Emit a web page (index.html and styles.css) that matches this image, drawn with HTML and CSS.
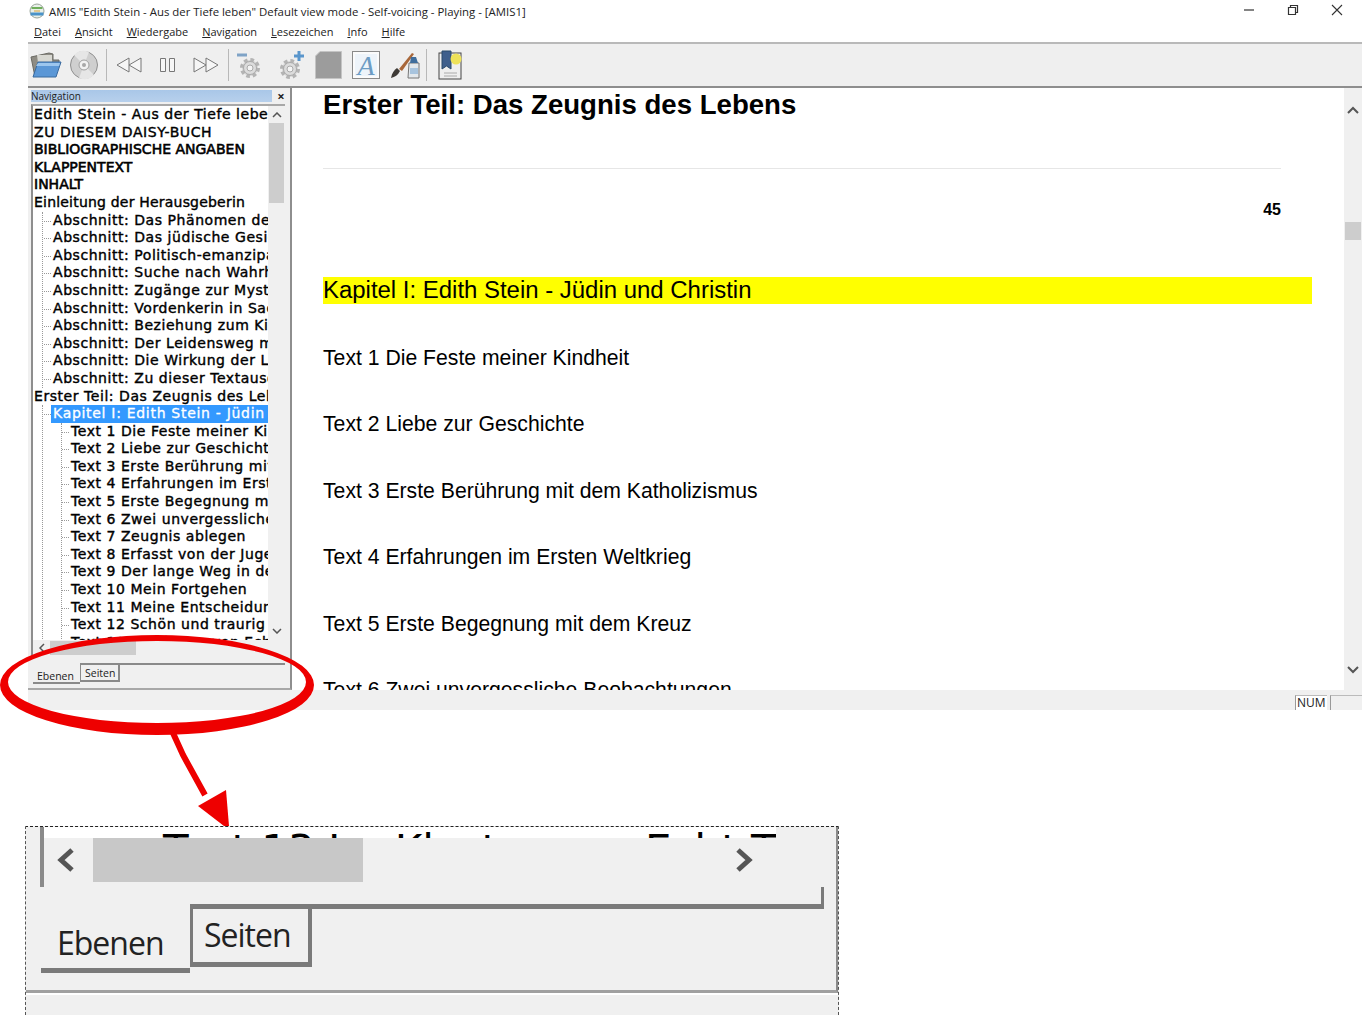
FILE: index.html
```html
<!DOCTYPE HTML>
<html lang="de">
<head>
  <title>AMIS</title>
  <meta content="text/html;charset=utf-8" http-equiv="Content-type"/>
  <link rel="stylesheet" href="styles.css">
</head>
<body>
<div class="window">
  <div class="titlebar">
    <svg class="app-icon" width="16" height="16" viewBox="0 0 16 16">
      <circle cx="8" cy="8" r="7" fill="#e8efe8" stroke="#9aa59a"/>
      <path d="M2.500 5h11" stroke="#6fae5a" stroke-width="2"/>
      <path d="M1.500 11h13" stroke="#4a93c9" stroke-width="3"/>
      <path d="M5 8h6" stroke="#d9a43a"/>
    </svg>
    <span class="title-text">AMIS "Edith Stein - Aus der Tiefe leben" Default view mode - Self-voicing - Playing - [AMIS1]</span>
    <div class="win-buttons">
      <svg width="12" height="12" viewBox="0 0 12 12"><path d="M1 6h10" stroke="#333" stroke-width="1.200"/></svg>
      <svg width="12" height="12" viewBox="0 0 12 12"><path d="M1.500 3.500h7v7h-7zM3.500 3.500v-2h7v7h-2" fill="none" stroke="#333" stroke-width="1.200"/></svg>
      <svg width="12" height="12" viewBox="0 0 12 12"><path d="M1 1l10 10M11 1L1 11" stroke="#333" stroke-width="1.100"/></svg>
    </div>
  </div>

  <div class="menubar">
    <span><u>D</u>atei</span>
    <span><u>A</u>nsicht</span>
    <span><u>W</u>iedergabe</span>
    <span><u>N</u>avigation</span>
    <span><u>L</u>esezeichen</span>
    <span><u>I</u>nfo</span>
    <span><u>H</u>ilfe</span>
  </div>

  <div class="toolbar">
    <svg class="tool t-folder" width="32" height="26" viewBox="0 0 32 26">
      <path d="M5 25L1 5l18-4 4 1 0 6h6v4H9z" fill="#8e8c84" stroke="#6b6a64"/>
      <path d="M7 3h15v8H8z" fill="#d8d8d2"/>
      <path d="M8 10h23l-5 15H3z" fill="#5b97d6" stroke="#3a6a9e"/>
      <path d="M8 11h22l-1 3H6z" fill="#9cc6ee"/>
    </svg>
    <svg class="tool t-cd" width="30" height="30" viewBox="0 0 30 30">
      <circle cx="15" cy="15" r="13.500" fill="#cfcfcf" stroke="#8f8f8f"/>
      <path d="M15 15L5 5a14 14 0 0 1 15-3zM15 15l10 10a14 14 0 0 1-15 3z" fill="#e6e6e6"/>
      <circle cx="15" cy="15" r="5" fill="#f2f2f2" stroke="#a0a0a0"/>
      <circle cx="15" cy="15" r="2" fill="#a8a8a8"/>
    </svg>
    <span class="sep"></span>
    <svg class="tool t-rew" width="26" height="16" viewBox="0 0 26 16">
      <path d="M13 1L1 8l12 7zM25 1L13 8l12 7z" fill="#f6f6f6" stroke="#777"/>
    </svg>
    <svg class="tool t-pause" width="17" height="16" viewBox="0 0 17 16">
      <path d="M1.500 1.500h5v13h-5zM10.500 1.500h5v13h-5z" fill="#f6f6f6" stroke="#777"/>
    </svg>
    <svg class="tool t-fwd" width="26" height="16" viewBox="0 0 26 16">
      <path d="M1 1l12 7-12 7zM13 1l12 7-12 7z" fill="#f6f6f6" stroke="#777"/>
    </svg>
    <span class="sep"></span>
    <svg class="tool t-gear1" width="26" height="28" viewBox="0 0 26 28">
      <path d="M1 4h10" stroke="#7fa3c6" stroke-width="3"/>
      <circle cx="14" cy="17" r="8" fill="#d6d6d6" stroke="#b4b4b4" stroke-width="4" stroke-dasharray="3.500 2.800"/>
      <circle cx="14" cy="17" r="6.500" fill="#dcdcdc" stroke="#aaa"/>
      <circle cx="14" cy="17" r="3" fill="#f4f4f4" stroke="#aaa"/>
    </svg>
    <svg class="tool t-gear2" width="26" height="28" viewBox="0 0 26 28">
      <path d="M15 5h10M20 0v10" stroke="#5a96cc" stroke-width="3"/>
      <circle cx="11" cy="18" r="8" fill="#d6d6d6" stroke="#b4b4b4" stroke-width="4" stroke-dasharray="3.500 2.800"/>
      <circle cx="11" cy="18" r="6.500" fill="#dcdcdc" stroke="#aaa"/>
      <circle cx="11" cy="18" r="3" fill="#f4f4f4" stroke="#aaa"/>
    </svg>
    <svg class="tool t-square" width="27" height="28" viewBox="0 0 27 28">
      <path d="M5 .5h21.500v27H.500V5z" fill="#9c9c9c" stroke="#c4c4c4"/>
    </svg>
    <svg class="tool t-font" width="28" height="28" viewBox="0 0 28 28">
      <rect x=".5" y=".5" width="27" height="27" fill="#fbfbfb" stroke="#8a8a8a"/>
      <rect x="3" y="3" width="22" height="22" fill="#eef4fa"/>
      <text x="14" y="24" text-anchor="middle" class="font-glyph">A</text>
    </svg>
    <svg class="tool t-brush" width="31" height="28" viewBox="0 0 31 28">
      <path d="M1 27c4-1 7-3 9-7l-3-3c-3 2-5 5-6 10z" fill="#3e3a36"/>
      <path d="M9 18L22 2l2 1-12 17z" fill="#a8673a"/>
      <path d="M19 12h10v15H18z" fill="#e3e8ec" stroke="#777"/>
      <path d="M20 17h8v6h-8z" fill="#a8c4de"/>
      <path d="M21 6h5l2 6h-8z" fill="#3f6d9c"/>
    </svg>
    <span class="sep"></span>
    <svg class="tool t-bookmark" width="25" height="30" viewBox="0 0 25 30">
      <rect x="1" y="3" width="22" height="26" fill="#efefef" stroke="#444"/>
      <path d="M4 1h9v18l-4.500-3L4 19z" fill="#3f5f8c" stroke="#2b4a6b"/>
      <circle cx="18" cy="9" r="5.500" fill="#eee25a"/>
      <path d="M6 23h13M6 26h13" stroke="#aaa"/>
    </svg>
  </div>

  <div class="workspace">
    <div class="navpane">
      <div class="nav-caption"><span>Navigation</span><b class="nav-close">×</b></div>
      <div class="nav-box">
        <div class="tree-row-area">
          <ul class="tree">
            <li>Edith Stein - Aus der Tiefe leben</li>
            <li>ZU DIESEM DAISY-BUCH</li>
            <li class="caps">BIBLIOGRAPHISCHE ANGABEN</li>
            <li class="caps">KLAPPENTEXT</li>
            <li class="caps">INHALT</li>
            <li class="tight">Einleitung der Herausgeberin
              <ul>
                <li>Abschnitt: Das Phänomen der</li>
                <li>Abschnitt: Das jüdische Gesicht</li>
                <li>Abschnitt: Politisch-emanzipativ</li>
                <li>Abschnitt: Suche nach Wahrheit</li>
                <li>Abschnitt: Zugänge zur Mystik</li>
                <li>Abschnitt: Vordenkerin in Sachen</li>
                <li>Abschnitt: Beziehung zum Kind</li>
                <li>Abschnitt: Der Leidensweg mit</li>
                <li>Abschnitt: Die Wirkung der Lehre</li>
                <li>Abschnitt: Zu dieser Textausgabe</li>
              </ul>
            </li>
            <li>Erster Teil: Das Zeugnis des Lebens
              <ul>
                <li><span class="selected">Kapitel I: Edith Stein - Jüdin</span>
                  <ul>
                    <li>Text 1 Die Feste meiner Kindheit</li>
                    <li>Text 2 Liebe zur Geschichte</li>
                    <li>Text 3 Erste Berührung mit dem</li>
                    <li>Text 4 Erfahrungen im Ersten</li>
                    <li>Text 5 Erste Begegnung mit</li>
                    <li>Text 6 Zwei unvergessliche</li>
                    <li>Text 7 Zeugnis ablegen</li>
                    <li>Text 8 Erfasst von der Jugend</li>
                    <li>Text 9 Der lange Weg in den</li>
                    <li>Text 10 Mein Fortgehen</li>
                    <li>Text 11 Meine Entscheidung</li>
                    <li>Text 12 Schön und traurig</li>
                    <li>Text 13 Im Kloster von Echt Text</li>
                  </ul>
                </li>
              </ul>
            </li>
          </ul>
        </div>
        <div class="nav-vscroll">
          <svg class="chev" width="10" height="6" viewBox="0 0 10 6"><path d="M1 5l4-4 4 4" fill="none" stroke="#555" stroke-width="1.500"/></svg>
          <span class="nav-vthumb"></span>
          <svg class="chev chev-end" width="10" height="6" viewBox="0 0 10 6"><path d="M1 1l4 4 4-4" fill="none" stroke="#555" stroke-width="1.500"/></svg>
        </div>
      </div>
      <div class="nav-hscroll">
        <svg width="6" height="10" viewBox="0 0 6 10"><path d="M5 1L1 5l4 4" fill="none" stroke="#555" stroke-width="1.500"/></svg>
        <span class="nav-hthumb"></span>
      </div>
      <div class="tabs">
        <span class="tab tab-on">Ebenen</span>
        <span class="tab tab-off">Seiten</span>
      </div>
    </div>

    <div class="doc">
      <div class="doc-body">
        <h1>Erster Teil: Das Zeugnis des Lebens</h1>
        <hr>
        <p class="pageno">45</p>
        <h2>Kapitel I: Edith Stein - Jüdin und Christin</h2>
        <p class="entry">Text 1 Die Feste meiner Kindheit</p>
        <p class="entry">Text 2 Liebe zur Geschichte</p>
        <p class="entry">Text 3 Erste Berührung mit dem Katholizismus</p>
        <p class="entry">Text 4 Erfahrungen im Ersten Weltkrieg</p>
        <p class="entry">Text 5 Erste Begegnung mit dem Kreuz</p>
        <p class="entry">Text 6 Zwei unvergessliche Beobachtungen</p>
      </div>
      <div class="doc-scroll">
        <svg width="12" height="8" viewBox="0 0 12 8"><path d="M1 7l5-5 5 5" fill="none" stroke="#555" stroke-width="2"/></svg>
        <span class="doc-thumb"></span>
        <svg class="chev-end" width="12" height="8" viewBox="0 0 12 8"><path d="M1 1l5 5 5-5" fill="none" stroke="#555" stroke-width="2"/></svg>
      </div>
    </div>
  </div>

  <div class="statusbar">
    <span class="status-cell">NUM</span>
    <span class="status-cell status-empty"></span>
  </div>
</div>

<div class="inset">
  <div class="inset-pane">
    <div class="inset-clip">Text 13 Im Kloster von Echt Text</div>
    <div class="inset-scroll">
      <svg width="22" height="26" viewBox="0 0 22 26"><path d="M17 3L6 13l11 10" fill="none" stroke="#555" stroke-width="5"/></svg>
      <span class="inset-thumb"></span>
      <svg class="inset-right" width="22" height="26" viewBox="0 0 22 26"><path d="M5 3l11 10L5 23" fill="none" stroke="#555" stroke-width="5"/></svg>
    </div>
    <div class="inset-tabline"></div>
    <div class="inset-tabs">
      <span class="inset-tab inset-on">Ebenen</span>
      <span class="inset-tab inset-off">Seiten</span>
    </div>
  </div>
</div>

<svg class="callout" width="340" height="200" viewBox="0 0 340 200">
  <path fill-rule="evenodd" fill="#ee0000" d="M0 55a157 50 0 1 0 314 0a157 50 0 1 0-314 0zM8 52a149 41 0 1 1 298 0a149 41 0 1 1-298 0z"/>
  <path d="M173 103l10 22 22 40" fill="none" stroke="#ee0000" stroke-width="6"/>
  <path d="M198 176l28-16 3 36h-5z" fill="#ee0000"/>
</svg>
</body>
</html>
```

FILE: styles.css
```css
body {
    margin: 0;
    position: relative;
    height: 1015px;
    overflow: hidden;
    background-color: #fff;
    color: #000;
    font-family: 'Open Sans', 'Noto Sans', Arial, sans-serif;
}

.window {
    height: 710px;
    display: flex;
    flex-direction: column;
}

/* title and menu */
.titlebar {
    height: 22px;
    display: flex;
    align-items: center;
    padding-left: 29px;
    font-size: 11.400px;
    color: #222;
}

.app-icon {
    flex: none;
}

.title-text {
    margin-left: 4px;
    flex: auto;
}

.win-buttons {
    display: flex;
    gap: 32px;
    padding-right: 19px;
    margin-top: -2px;
}

.menubar {
    height: 18px;
    margin-bottom: 2px;
    display: flex;
    align-items: center;
    gap: 14px;
    padding-left: 34px;
    font-size: 11px;
    color: #222;
}

.menubar u {
    text-decoration-thickness: 1px;
}

/* toolbar */
.toolbar {
    height: 46px;
    margin-left: 28px;
    display: flex;
    align-items: center;
    background-color: #efefef;
    border-top: 2px solid #b9b9b9;
    border-bottom: 2px solid #8e8e8e;
    box-sizing: border-box;
    padding-left: 2px;
    padding-bottom: 1px;
}

.tool {
    flex: none;
}

.sep {
    flex: none;
    width: 1px;
    height: 32px;
    background-color: #b8b8b8;
}

.t-cd { margin-left: 7px; }
.toolbar .t-cd + .sep { margin-left: 7px; }
.t-rew { margin-left: 9px; }
.t-pause { margin-left: 17px; }
.t-fwd { margin-left: 17px; }
.t-fwd + .sep { margin-left: 9px; }
.t-gear1 { margin-left: 7px; }
.t-gear2 { margin-left: 17px; }
.t-square { margin-left: 10px; }
.t-font { margin-left: 10px; }
.t-brush { margin-left: 10px; }
.t-brush + .sep { margin-left: 5px; }
.t-bookmark { margin-left: 11px; }

.font-glyph {
    font-family: 'Liberation Serif', serif;
    font-style: italic;
    font-size: 28px;
    fill: #6d9cc4;
}

/* main area */
.workspace {
    height: 602px;
    display: flex;
    margin-left: 28px;
}

.navpane {
    flex: none;
    width: 264px;
    box-sizing: border-box;
    background-color: #f0f0f0;
    border-right: 2px solid #8e8e8e;
    border-bottom: 2px solid #a8a8a8;
    display: flex;
    flex-direction: column;
}

.nav-caption {
    height: 12px;
    margin: 2px 0 2px 3px;
    display: flex;
    align-items: center;
    justify-content: space-between;
    font-size: 10px;
    line-height: 12px;
    color: #222;
}

.nav-caption span {
    flex: auto;
    background: linear-gradient(#a9c7e8, #b7d0ec);
}

.nav-close {
    flex: none;
    width: 18px;
    text-align: center;
    font-size: 13px;
}

.nav-box {
    flex: none;
    height: 536px;
    margin-left: 3px;
    margin-right: 5px;
    display: flex;
    background-color: #fff;
    border-left: 2px solid #8e8e8e;
    border-top: 2px solid #a8a8a8;
    box-sizing: border-box;
}

.tree-row-area {
    flex: auto;
    overflow: hidden;
    min-width: 0;
}

.tree,
.tree ul {
    list-style: none;
    margin: 0;
    padding: 0;
    font-family: 'DejaVu Sans', Verdana, sans-serif;
    font-size: 14px;
    letter-spacing: 0.55px;
    line-height: 17.590px;
    white-space: nowrap;
    -webkit-text-stroke: 0.4px #000;
}

.tree {
    padding-left: 1px;
}

.tree .caps {
    letter-spacing: 0;
    -webkit-text-stroke: 0.6px #000;
}

.tree .tight {
    letter-spacing: 0.2px;
}

.tree ul {
    margin-left: 8px;
    padding-left: 10px;
    border-left: 1px dotted #999;
}

.tree ul ul {
    padding-left: 9px;
}

.tree ul > li {
    position: relative;
}

.tree ul > li::before {
    content: '';
    position: absolute;
    left: -9px;
    top: 9px;
    width: 7px;
    border-top: 1px dotted #999;
}

.selected {
    display: inline-block;
    width: 215px;
    margin-left: -2px;
    padding-left: 2px;
    overflow: hidden;
    vertical-align: top;
    background-color: #3399ff;
    color: #fff;
    letter-spacing: 0.7px;
    -webkit-text-stroke: 0.3px #fff;
}

.nav-vscroll {
    flex: none;
    width: 17px;
    background-color: #f0f0f0;
    display: flex;
    flex-direction: column;
    align-items: center;
    padding-top: 6px;
    box-sizing: border-box;
}

.nav-vthumb {
    width: 15px;
    height: 80px;
    margin-top: 5px;
    background-color: #cdcdcd;
}

.chev {
    flex: none;
}

.chev-end {
    margin-top: auto;
    margin-bottom: 6px;
}

.nav-hscroll {
    flex: none;
    height: 16px;
    margin-left: 3px;
    margin-right: 5px;
    display: flex;
    align-items: center;
    padding-left: 6px;
    background-color: #f0f0f0;
    border-left: 2px solid #8e8e8e;
    box-sizing: border-box;
}

.nav-hthumb {
    width: 86px;
    height: 14px;
    margin-left: 5px;
    background-color: #cdcdcd;
}

.tabs {
    flex: auto;
    display: flex;
    align-items: flex-start;
    font-size: 10.500px;
    color: #222;
    margin-top: 7px;
    margin-right: 5px;
    padding-left: 5px;
    background: linear-gradient(#8a8a8a, #8a8a8a) 52px 0 / 100% 2px no-repeat;
}

.tab {
    display: block;
    box-sizing: border-box;
}

.tab-on {
    width: 47px;
    height: 21px;
    padding: 6px 0 0 4px;
    border-bottom: 2px solid #8a8a8a;
}

.tab-off {
    width: 40px;
    height: 19px;
    padding: 1px 0 0 4px;
    border-top: 2px solid #8a8a8a;
    border-left: 1px solid #8a8a8a;
    border-right: 2px solid #8a8a8a;
    border-bottom: 2px solid #8a8a8a;
    line-height: 14px;
}

/* document view */
.doc {
    flex: auto;
    min-width: 0;
    display: flex;
    background-color: #fff;
}

.doc-body {
    flex: auto;
    min-width: 0;
    overflow: hidden;
    padding-left: 31px;
    font-family: 'Liberation Sans', Arial, sans-serif;
    height: 602px;
}

.doc-body h1 {
    margin: 0;
    font-size: 27.600px;
    line-height: 33px;
}

.doc-body hr {
    margin: 47px 0 0;
    width: 958px;
    height: 1px;
    border: 0;
    background-color: #e6e6e6;
}

.pageno {
    margin: 32px 0 0;
    width: 958px;
    text-align: right;
    font-size: 16px;
    line-height: 18px;
    font-weight: bold;
}

.doc-body h2 {
    margin: 58px 0 0;
    width: 989px;
    height: 27px;
    background-color: #ffff00;
    font-size: 23.950px;
    line-height: 25px;
    font-weight: normal;
}

.entry {
    margin: 0;
    height: 66.400px;
    font-size: 21.200px;
    line-height: 26px;
    padding-top: 41px;
    box-sizing: border-box;
}

.doc-scroll {
    flex: none;
    width: 18px;
    height: 602px;
    background-color: #f0f0f0;
    display: flex;
    flex-direction: column;
    align-items: center;
    padding-top: 18px;
    box-sizing: border-box;
}

.doc-thumb {
    width: 16px;
    height: 18px;
    margin-top: 108px;
    background-color: #cdcdcd;
}

.doc-scroll .chev-end {
    margin-bottom: 16px;
}

.statusbar {
    height: 20px;
    margin-left: 28px;
    display: flex;
    justify-content: flex-end;
    gap: 3px;
    background-color: #f0f0f0;
    font-size: 12px;
    color: #222;
}

.status-cell {
    width: 32px;
    box-sizing: border-box;
    margin-top: 5px;
    padding-left: 1px;
    border-left: 1px solid #999;
    border-top: 1px solid #bbb;
    line-height: 14px;
    background-color: #fff;
}

.status-empty {
    background-color: #f0f0f0;
}

/* enlarged detail below the window */
.inset {
    margin: 116px 0 0 25px;
    width: 814px;
    height: 189px;
    box-sizing: border-box;
    border-left: 1px dashed #555;
    border-right: 1px dashed #555;
    border-top: 1px dashed #222;
    background-color: #f0f0f0;
}

.inset-pane {
    height: 166px;
    box-sizing: border-box;
    border-right: 2px solid #8a8a8a;
    border-bottom: 3px solid #a0a0a0;
    box-shadow: 0 2px 0 #fff;
}

.inset-clip {
    height: 11px;
    overflow: hidden;
    background-color: #fff;
    margin-left: 14px;
    margin-right: 60px;
    padding-left: 119px;
    border-left: 4px solid #8a8a8a;
    font-family: 'DejaVu Sans', Verdana, sans-serif;
    font-size: 42px;
    line-height: 48px;
    white-space: nowrap;
}

.inset-scroll {
    height: 49px;
    margin-left: 14px;
    margin-right: 15px;
    border-left: 4px solid #8a8a8a;
    display: flex;
    align-items: flex-start;
    padding-left: 11px;
    padding-right: 66px;
    box-sizing: border-box;
}

.inset-scroll svg {
    margin-top: 9px;
    flex: none;
}

.inset-thumb {
    width: 270px;
    height: 44px;
    margin-left: 16px;
    background-color: #c8c8c8;
}

.inset-right {
    margin-left: auto;
}

.inset-tabline {
    height: 22px;
    margin-left: 164px;
    margin-right: 12px;
    box-sizing: border-box;
    border-right: 3px solid #7a7a7a;
    border-bottom: 5px solid #7a7a7a;
}

.inset-tabs {
    display: flex;
    align-items: flex-start;
    padding-left: 15px;
    font-size: 32px;
    color: #222;
    letter-spacing: -1px;
}

.inset-tab {
    display: block;
    box-sizing: border-box;
}

.inset-on {
    width: 149px;
    height: 64px;
    padding: 12px 0 0 16px;
    border-bottom: 5px solid #7a7a7a;
    line-height: 44px;
}

.inset-off {
    width: 122px;
    height: 58px;
    padding: 4px 0 0 11px;
    border-left: 3px solid #7a7a7a;
    border-right: 4px solid #7a7a7a;
    border-bottom: 5px solid #7a7a7a;
    line-height: 44px;
}

/* red hand-drawn callout lying over the screenshot */
.callout {
    position: absolute;
    left: 0;
    top: 630px;
    pointer-events: none;
}
```
